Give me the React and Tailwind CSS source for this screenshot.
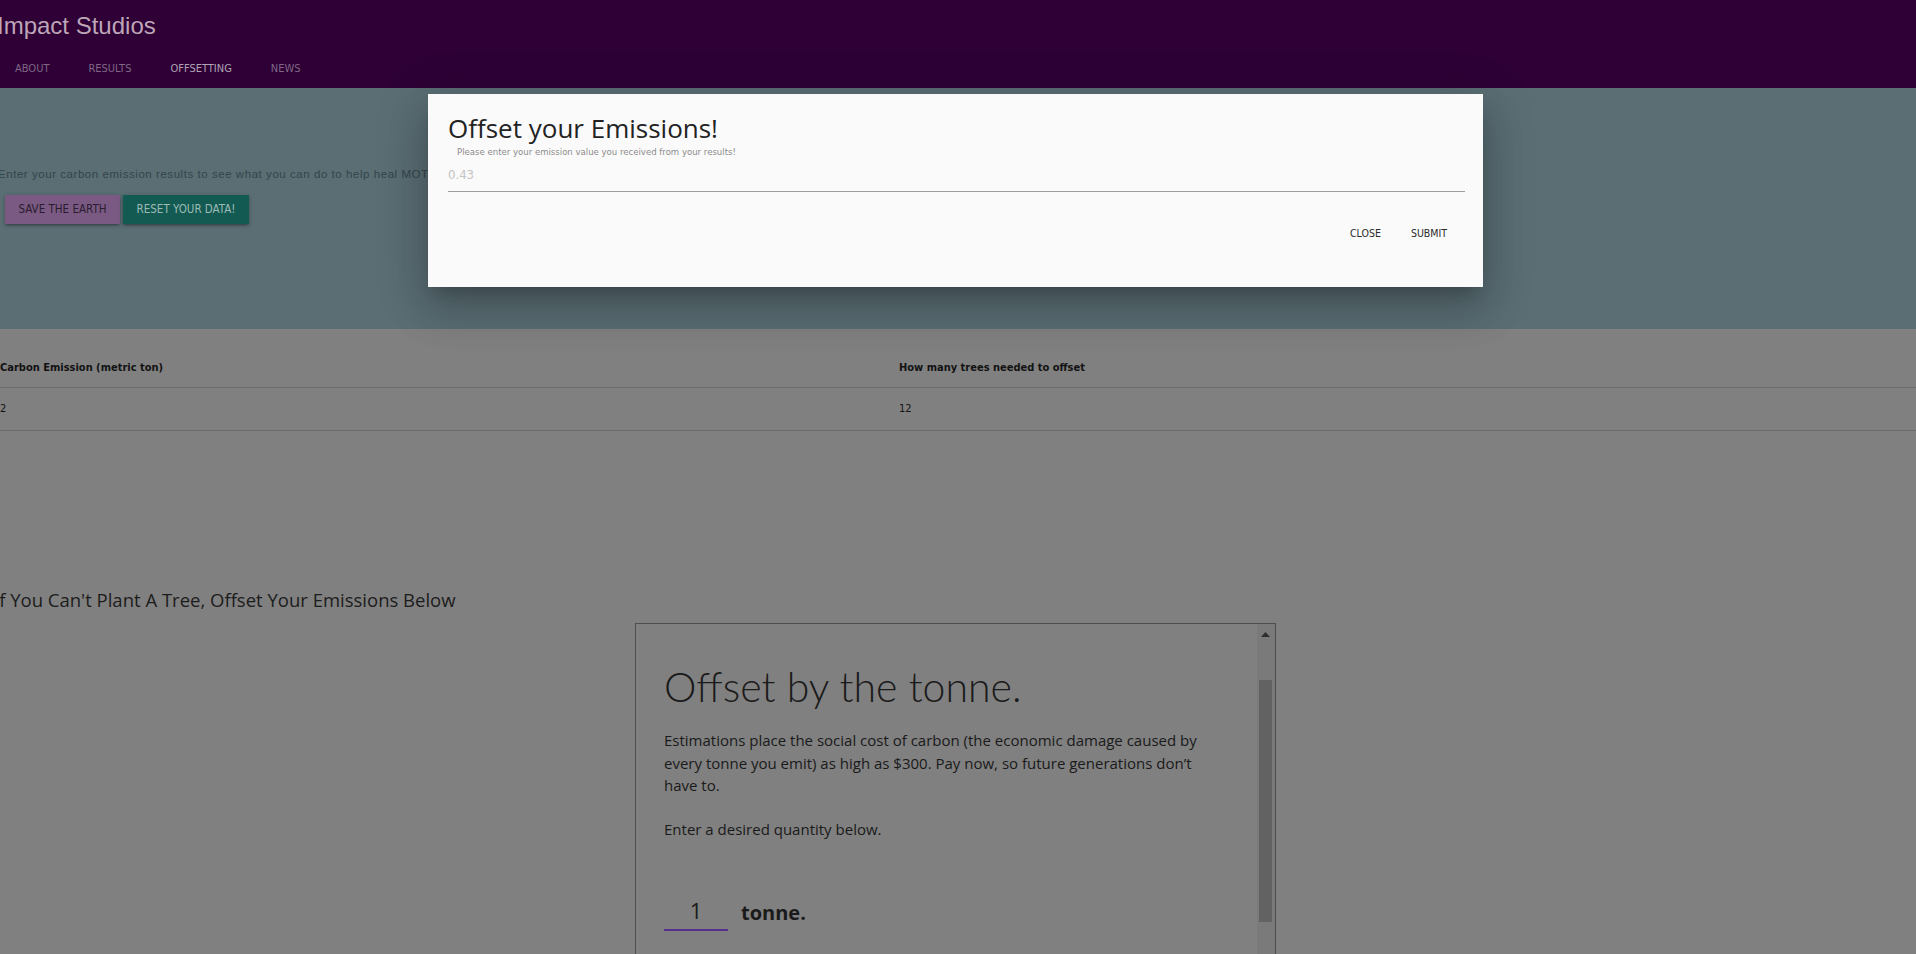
export default function App() {
  return (
    <div className="relative w-[1916px] h-[954px] overflow-hidden bg-[#808080] font-['Open_Sans','Liberation_Sans',sans-serif]">
      {/* Header */}
      <header className="h-[88px] bg-[#2e0036]">
        <div className="h-[60px] pt-[12px]">
          <div className="-ml-[3px] text-[24px] leading-[28px] text-[#bda6b6] font-['Liberation_Sans',sans-serif]">
            Impact Studios
          </div>
        </div>
        <nav className="flex h-[28px] pl-[15px] gap-[39px] font-['DejaVu_Sans_Condensed','Liberation_Sans',sans-serif] text-[11px] leading-[16px] pt-[1px]">
          <span className="text-[#7f6785]">ABOUT</span>
          <span className="text-[#7f6785]">RESULTS</span>
          <span className="text-[#b0a3b4]">OFFSETTING</span>
          <span className="text-[#7f6785]">NEWS</span>
        </nav>
      </header>

      {/* Blue band */}
      <section className="h-[241px] bg-[#5a6e74] pt-[79px]">
        <p className="-ml-[2px] whitespace-nowrap text-[11.5px] leading-[14px] tracking-[0.55px] text-[#34454b] font-['Liberation_Sans',sans-serif]">
          Enter your carbon emission results to see what you can do to help heal MOTHER EARTH!
        </p>
        <div className="mt-[14px] flex gap-[3px] pl-[5px] font-['DejaVu_Sans_Condensed','Liberation_Sans',sans-serif] text-[11.5px]">
          <button className="h-[29px] w-[115px] bg-[#7a5a82] text-[#2a1c30] shadow-[0_2px_2px_0_rgba(0,0,0,0.14),0_3px_1px_-2px_rgba(0,0,0,0.12),0_1px_5px_0_rgba(0,0,0,0.2)]">
            SAVE THE EARTH
          </button>
          <button className="h-[29px] w-[126px] bg-[#135a52] text-[#9dbbb4] shadow-[0_2px_2px_0_rgba(0,0,0,0.14),0_3px_1px_-2px_rgba(0,0,0,0.12),0_1px_5px_0_rgba(0,0,0,0.2)]">
            RESET YOUR DATA!
          </button>
        </div>
      </section>

      {/* Table */}
      <div className="mt-[20px] text-[#121212] font-['DejaVu_Sans_Condensed','Liberation_Sans',sans-serif] text-[11px]">
        <div className="grid grid-cols-[899px_1fr] h-[39px] items-center border-b border-[#6c6c6c] font-bold">
          <div>Carbon Emission (metric ton)</div>
          <div>How many trees needed to offset</div>
        </div>
        <div className="grid grid-cols-[899px_1fr] h-[43px] items-center border-b border-[#6c6c6c]">
          <div>2</div>
          <div>12</div>
        </div>
      </div>

      {/* Heading */}
      <h2 className="mt-[157px] -ml-[6px] text-[18.5px] leading-[24px] text-[#1c1c1c]">
        If You Can't Plant A Tree, Offset Your Emissions Below
      </h2>

      {/* Embedded frame */}
      <div className="mt-[11px] ml-[635px] w-[641px] h-[400px] border border-[#4e4e4e] flex">
        <div className="flex-1 pl-[28px] pt-[38px] text-[#1a1a1a]">
          <h3 className="text-[41px] leading-[50px] font-light font-['Lato',sans-serif]">Offset by the tonne.</h3>
          <p className="mt-[17px] w-[555px] text-[15px] leading-[22.5px]">
            Estimations place the social cost of carbon (the economic damage caused by every tonne you emit) as high as $300. Pay now, so future generations don’t have to.
          </p>
          <p className="mt-[21px] text-[15px] leading-[22.5px]">Enter a desired quantity below.</p>
          <div className="mt-[51px] flex items-end gap-[13px]">
            <div className="w-[64px] h-[40px] border-b-2 border-[#55308a] flex items-center justify-center text-[22px] leading-[26px]">
              1
            </div>
            <span className="mb-[5px] text-[20px] leading-[26px] font-bold">tonne.</span>
          </div>
        </div>
        <div className="w-[18px] bg-[#7a7a7a] relative">
          <svg className="absolute left-[4px] top-[8px]" width="9" height="5" viewBox="0 0 9 5">
            <polygon points="4.5,0 9,5 0,5" fill="#2e2e2e" />
          </svg>
          <div className="absolute left-[2px] top-[56px] w-[13px] h-[242px] bg-[#626262]" />
        </div>
      </div>

      {/* Modal */}
      <div className="absolute left-[428px] top-[94px] w-[1055px] h-[193px] bg-[#fafafa] pl-[20px] pr-[18px] pt-[19px] shadow-[0_24px_38px_3px_rgba(0,0,0,0.14),0_9px_46px_8px_rgba(0,0,0,0.12),0_11px_15px_-7px_rgba(0,0,0,0.2)]">
        <h4 className="text-[26px] leading-[30px] text-[#222222]">Offset your Emissions!</h4>
        <div className="mt-[3px] pl-[9px] text-[9.5px] leading-[12px] text-[#8c8c8c] font-['DejaVu_Sans_Condensed','Liberation_Sans',sans-serif]">
          Please enter your emission value you received from your results!
        </div>
        <div className="h-[34px] border-b border-[#9e9e9e] flex items-center text-[13px] text-[#c4c4c4] font-['DejaVu_Sans_Condensed','Liberation_Sans',sans-serif]">
          0.43
        </div>
        <div className="mt-[34px] flex justify-end gap-[30px] pr-[18px] text-[10.5px] leading-[14px] text-[#2a2a2a] font-['DejaVu_Sans_Condensed','Liberation_Sans',sans-serif]">
          <span>CLOSE</span>
          <span>SUBMIT</span>
        </div>
      </div>
    </div>
  );
}
